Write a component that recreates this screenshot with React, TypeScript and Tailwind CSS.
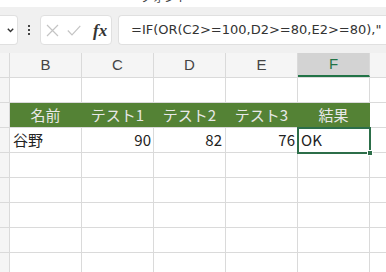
const cols = ['B', 'C', 'D', 'E', 'F']
const heads = ['名前', 'テスト1', 'テスト2', 'テスト3', '結果']

const font = { fontFamily: '"Noto Sans CJK JP", "Noto Sans", sans-serif' }

function Cell({ children, className = '' }: { children?: React.ReactNode; className?: string }) {
  return (
    <div className={`w-[72px] shrink-0 h-full border-r border-[#dadada] flex items-center ${className}`}>
      {children}
    </div>
  )
}

function Row({ children, className = '' }: { children?: React.ReactNode; className?: string }) {
  return (
    <div className={`flex h-[25px] border-b border-[#dadada] ${className}`}>
      <div className="w-[10px] shrink-0 h-full border-r border-[#dadada] bg-[#f5f5f5]" />
      {children}
      <div className="flex-1" />
    </div>
  )
}

function FormulaBar() {
  return (
    <div className="h-[53px] bg-[#f0f0f0] relative overflow-hidden">
      <div className="h-[7px] bg-white relative overflow-hidden text-[12px] text-[#444] leading-none">
        <span className="absolute left-[15px] -top-[9px]">ー</span>
        <span className="absolute left-[140px] -top-[9px]">フォント</span>
        <span className="absolute left-[297px] -top-[9px]">ー</span>
      </div>
      <div className="flex items-start pt-[8px] h-[38px]">
        <div className="w-[18px] h-[30px] bg-white rounded-r-[4px] border border-l-0 border-[#e0e0e0] flex items-center justify-end pr-[3px]">
          <svg width="7" height="5" viewBox="0 0 7 5">
            <path d="M0.8 0.8 L3.5 3.6 L6.2 0.8" fill="none" stroke="#333" strokeWidth="1.4" />
          </svg>
        </div>
        <div className="w-[22px] h-[30px] flex flex-col items-center justify-center gap-[2px]">
          <span className="w-[2px] h-[2px] bg-[#444]" />
          <span className="w-[2px] h-[2px] bg-[#444]" />
          <span className="w-[2px] h-[2px] bg-[#444]" />
        </div>
        <div className="w-[72px] h-[30px] bg-white rounded-[4px] border border-[#e0e0e0] flex items-center pl-[5px]">
          <svg width="13" height="13" viewBox="0 0 13 13">
            <path d="M1 1 L12 12 M12 1 L1 12" stroke="#c4c4c4" strokeWidth="1.2" fill="none" />
          </svg>
          <svg width="14" height="11" viewBox="0 0 14 11" className="ml-[8px]">
            <path d="M0.8 5.5 L5 9.8 L13.3 0.8" stroke="#c4c4c4" strokeWidth="1.2" fill="none" />
          </svg>
          <span
            className="ml-[12px] text-[17px] italic font-bold text-[#333] leading-none"
            style={{ fontFamily: '"Liberation Serif", serif' }}
          >
            fx
          </span>
        </div>
        <div className="ml-[6px] flex-1 h-[30px] bg-white rounded-l-[4px] border border-r-0 border-[#e0e0e0] flex items-center pl-[12px] whitespace-nowrap overflow-hidden">
          <span className="text-[13px] text-[#333]" style={{ fontFamily: '"DejaVu Sans", sans-serif' }}>
            =IF(OR(C2&gt;=100,D2&gt;=80,E2&gt;=80),"
          </span>
        </div>
      </div>
    </div>
  )
}

export default function App() {
  return (
    <div className="w-[386px] h-[272px] overflow-hidden bg-white" style={font}>
      <FormulaBar />
      <Row className="bg-[#f5f5f5]">
        {cols.map((c) => (
          <Cell
            key={c}
            className={`justify-center text-[15px] ${
              c === 'F' ? 'bg-[#d3d3d3] text-[#217346] border-b-2 border-b-[#217346]' : 'text-[#444]'
            }`}
          >
            <span style={{ fontFamily: '"Liberation Sans", sans-serif' }}>{c}</span>
          </Cell>
        ))}
      </Row>
      <Row>
        {cols.map((c) => (
          <Cell key={c} />
        ))}
      </Row>
      <Row>
        {heads.map((h) => (
          <Cell key={h} className="justify-center bg-[#548235] border-r-[#548235] text-[15px] text-[#e8e8e8]">
            {h}
          </Cell>
        ))}
      </Row>
      <Row>
        <Cell className="pl-[3px] text-[15px] text-[#222]">谷野</Cell>
        <Cell className="justify-end pr-[2px] text-[15px] text-[#222]">90</Cell>
        <Cell className="justify-end pr-[3px] text-[15px] text-[#222]">82</Cell>
        <Cell className="justify-end pr-[2px] text-[15px] text-[#222]">76</Cell>
        <div className="w-[72px] shrink-0 h-full relative">
          <div className="absolute -left-[1px] -top-[1px] w-[74px] h-[27px] border-2 border-[#2c6e49] flex items-center pl-[2px] text-[15px] text-[#222]">
            OK
          </div>
          <div className="absolute left-[69px] top-[22px] w-[6px] h-[6px] bg-[#2c6e49] border border-white" />
        </div>
      </Row>
      {[0, 1, 2, 3, 4].map((i) => (
        <Row key={i}>
          {cols.map((c) => (
            <Cell key={c} />
          ))}
        </Row>
      ))}
    </div>
  )
}
